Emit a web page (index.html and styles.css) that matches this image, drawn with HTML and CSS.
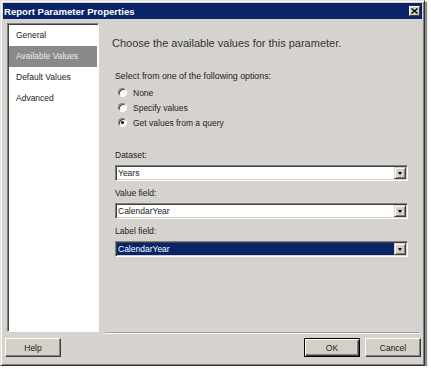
FILE: index.html
```html
<!DOCTYPE html>
<html lang="en">
<head>
    <meta charset="UTF-8">
    <title>Report Parameter Properties</title>
    <link rel="stylesheet" href="styles.css">
</head>
<body>
    <div class="window">
        <div class="titlebar">
            <span class="title">Report Parameter Properties</span>
            <span class="close">
                <svg width="7" height="6" viewBox="0 0 7 6"><path d="M0.5 0.5 L6.5 5.5 M6.5 0.5 L0.5 5.5" stroke="#000" stroke-width="1.4"/></svg>
            </span>
        </div>

        <div class="content">
            <ul class="nav">
                <li>General</li>
                <li class="active">Available Values</li>
                <li>Default Values</li>
                <li>Advanced</li>
            </ul>

            <div class="page">
                <h1>Choose the available values for this parameter.</h1>
                <p class="hint">Select from one of the following options:</p>

                <div class="options">
                    <div class="option"><span class="radio"></span>None</div>
                    <div class="option"><span class="radio"></span>Specify values</div>
                    <div class="option"><span class="radio checked"></span>Get values from a query</div>
                </div>

                <div class="field">
                    <div class="field-label">Dataset:</div>
                    <div class="combo"><span class="value">Years</span><span class="drop"></span></div>
                </div>
                <div class="field">
                    <div class="field-label">Value field:</div>
                    <div class="combo"><span class="value">CalendarYear</span><span class="drop"></span></div>
                </div>
                <div class="field">
                    <div class="field-label">Label field:</div>
                    <div class="combo focus"><span class="value">CalendarYear</span><span class="drop"></span></div>
                </div>
            </div>
        </div>

        <div class="footer">
            <button class="btn">Help</button>
            <span class="spacer"></span>
            <button class="btn btn-default">OK</button>
            <button class="btn">Cancel</button>
        </div>
    </div>
</body>
</html>
```

FILE: styles.css
```css
body {
    margin: 0;
    background-color: #fff;
    font-family: "Liberation Sans", Arial, sans-serif;
    font-size: 8.5px;
    color: #1c1c1c;
}
.window {
    width: 425px;
    height: 366px;
    box-sizing: border-box;
    background-color: #d6d3ce;
    border: 1px solid;
    border-color: #e4e1dc #333 #333 #e4e1dc;
    box-shadow: inset 1px 1px 0 #fff, inset -1px -1px 0 #808080, 2px 2px 1px rgba(0,0,0,0.45);
    padding: 2px;
    display: flex;
    flex-direction: column;
}
.titlebar {
    height: 16px;
    background-color: #0a246a;
    color: #fff;
    font-size: 9.6px;
    font-weight: bold;
    display: flex;
    align-items: center;
    justify-content: space-between;
    padding: 0 2px 0 1px;
}
.close {
    width: 11px;
    height: 10px;
    box-sizing: border-box;
    background-color: #d4d0c8;
    border: 1px solid;
    border-color: #fff #404040 #404040 #fff;
    display: flex;
    align-items: center;
    justify-content: center;
}
.content {
    display: flex;
    height: 310px;
    margin: 4px 2px 0 4px;
}
.nav {
    width: 92px;
    height: 309px;
    box-sizing: border-box;
    margin: 0;
    padding: 1px 1px 0 1px;
    list-style: none;
    background-color: #fff;
    border: 1px solid;
    border-color: #808080 #fff #fff #808080;
    box-shadow: inset 1px 1px 0 #404040;
}
.nav li {
    height: 21px;
    line-height: 21px;
    padding-left: 7px;
}
.nav li.active {
    background-color: #8a8a8a;
    color: #ececec;
}
.page {
    flex: 1;
    margin-left: 6px;
    padding: 0 12px 0 10px;
    border-bottom: 1px solid #a0a0a0;
    box-shadow: 0 1px 0 #fff;
}
.page h1 {
    margin: 13px 0 0 -3px;
    font-size: 11px;
    font-weight: normal;
    line-height: 14px;
    color: #333;
}
.hint {
    margin: 20px 0 0 0;
    line-height: 12px;
    font-size: 8.8px;
}
.options {
    margin: 3px 0 0 3px;
}
.option {
    height: 15px;
    display: flex;
    align-items: center;
    gap: 6px;
}
.radio {
    width: 9px;
    height: 9px;
    box-sizing: border-box;
    border-radius: 50%;
    background-color: #fff;
    border: 1px solid;
    border-color: #808080 #fff #fff #808080;
    box-shadow: inset 1px 1px 0 #404040;
    display: flex;
    align-items: center;
    justify-content: center;
}
.radio.checked::after {
    content: "";
    width: 3px;
    height: 3px;
    border-radius: 50%;
    background-color: #000;
}
.field {
    margin-top: 19px;
}
.field + .field {
    margin-top: 6px;
}
.field-label {
    line-height: 12px;
    margin-bottom: 4px;
}
.combo {
    height: 16px;
    box-sizing: border-box;
    display: flex;
    padding: 1px;
    background-color: #fff;
    border: 1px solid;
    border-color: #808080 #fff #fff #808080;
    box-shadow: inset 1px 1px 0 #404040, inset -1px -1px 0 #d4d0c8;
}
.combo .value {
    flex: 1;
    line-height: 12px;
    padding-left: 1px;
}
.combo.focus .value {
    background-color: #0a246a;
    color: #fff;
}
.drop {
    width: 12px;
    box-sizing: border-box;
    background-color: #d4d0c8;
    border: 1px solid;
    border-color: #d4d0c8 #404040 #404040 #d4d0c8;
    box-shadow: inset 1px 1px 0 #fff, inset -1px -1px 0 #808080;
    display: flex;
    align-items: center;
    justify-content: center;
}
.drop::after {
    content: "";
    border-left: 2.5px solid transparent;
    border-right: 2.5px solid transparent;
    border-top: 3px solid #000;
}
.footer {
    display: flex;
    gap: 5px;
    margin: 5px 1px 0 2px;
}
.spacer {
    flex: 1;
}
.btn {
    width: 56px;
    height: 19px;
    box-sizing: border-box;
    padding: 0;
    font: inherit;
    color: #1c1c1c;
    background-color: #d4d0c8;
    border: 1px solid;
    border-color: #fff #404040 #404040 #fff;
    box-shadow: inset -1px -1px 0 #808080;
}
.btn-default {
    border-color: #000;
    box-shadow: inset 1px 1px 0 #fff, inset -1px -1px 0 #404040, inset -2px -2px 0 #808080;
}
```
